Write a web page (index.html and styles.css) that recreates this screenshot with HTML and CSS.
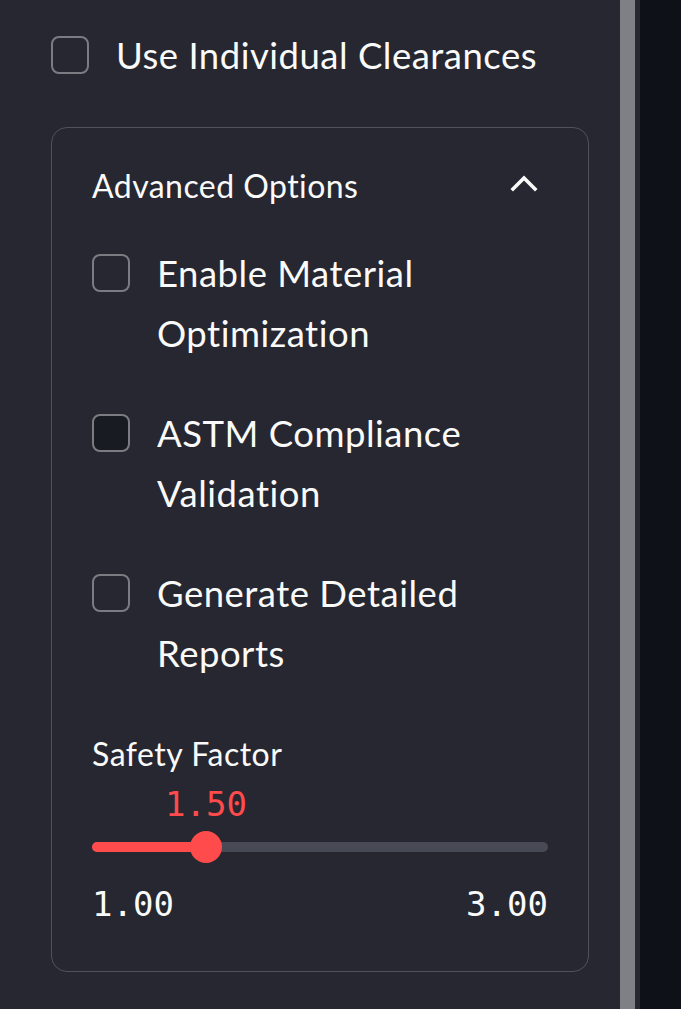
FILE: index.html
```html
<!DOCTYPE html>
<html lang="en">
<head>
<meta charset="utf-8">
<title>Sidebar</title>
<link rel="stylesheet" href="styles.css">
</head>
<body>
<div class="app">
  <aside class="sidebar">
    <div class="sidebar-content">
      <label class="check">
        <span class="box"></span>
        <span class="check-label">Use Individual Clearances</span>
      </label>

      <section class="expander">
        <div class="exp-header">
          <span class="exp-title">Advanced Options</span>
          <svg class="chev" width="28" height="18" viewBox="0 0 28 18" aria-hidden="true">
            <polyline points="3,15 14,4 25,15" fill="none" stroke="#fafafa" stroke-width="3.6" stroke-linecap="square" stroke-linejoin="miter"/>
          </svg>
        </div>
        <div class="exp-body">
          <label class="check">
            <span class="box"></span>
            <span class="check-label">Enable Material Optimization</span>
          </label>
          <label class="check">
            <span class="box box-dark"></span>
            <span class="check-label">ASTM Compliance Validation</span>
          </label>
          <label class="check">
            <span class="box"></span>
            <span class="check-label">Generate Detailed Reports</span>
          </label>

          <div class="slider-block">
            <div class="slider-title">Safety Factor</div>
            <div class="slider">
              <div class="track">
                <div class="fill" style="width:25%"></div>
                <div class="thumb" style="left:25%">
                  <span class="thumb-value">1.50</span>
                </div>
              </div>
            </div>
            <div class="ticks">
              <span>1.00</span>
              <span>3.00</span>
            </div>
          </div>
        </div>
      </section>
    </div>
    <div class="scrollbar"><div class="scroll-thumb"></div></div>
  </aside>
  <main class="main"></main>
</div>
</body>
</html>
```

FILE: styles.css
```css
html, body {
  margin: 0;
  padding: 0;
  height: 100%;
}
body {
  background: #0e1117;
  color: #fafafa;
  font-family: Lato, "Noto Sans", sans-serif;
  overflow: hidden;
}
.app {
  display: flex;
  height: 1009px;
}
.sidebar {
  width: 640px;
  flex: 0 0 640px;
  background: #262730;
  display: flex;
}
.sidebar-content {
  width: 620px;
  padding: 25px 31px 0 51px;
  box-sizing: border-box;
}
.scrollbar {
  width: 15px;
  flex: 0 0 15px;
  background: #7f7f86;
}
.main {
  flex: 1;
  background: #0e1117;
}

.check {
  display: flex;
  align-items: flex-start;
  gap: 27px;
}
.box {
  flex: 0 0 auto;
  width: 38px;
  height: 38px;
  margin-top: 11px;
  border: 2px solid #7b7c82;
  border-radius: 8px;
  box-sizing: border-box;
  background: #262730;
}
.box-dark {
  background: #191b23;
}
.check-label {
  font-size: 36.5px;
  letter-spacing: 0.5px;
  line-height: 60px;
}

.expander {
  margin-top: 42px;
  border: 1.5px solid #505159;
  border-radius: 16px;
  padding: 0 40px 0 40px;
  height: 845px;
  box-sizing: border-box;
}
.exp-header {
  display: flex;
  align-items: center;
  justify-content: space-between;
  height: 60px;
  margin-top: 28px;
}
.exp-title {
  font-size: 32px;
  letter-spacing: 0.45px;
  line-height: 60px;
}
.chev {
  margin-right: 10px;
  margin-top: -6px;
}
.exp-body {
  display: flex;
  flex-direction: column;
  gap: 40px;
  padding-top: 27px;
}

.slider-block {
  margin-top: 7px;
}
.slider-title {
  font-size: 32px;
  letter-spacing: 0.5px;
  line-height: 48px;
}
.slider {
  padding-top: 64px;
  padding-bottom: 0;
}
.track {
  position: relative;
  height: 10px;
  border-radius: 5px;
  background: #474954;
}
.fill {
  height: 100%;
  border-radius: 5px;
  background: #ff4b4b;
}
.thumb {
  position: absolute;
  top: 50%;
  width: 32px;
  height: 32px;
  margin-left: -16px;
  margin-top: -16px;
  border-radius: 50%;
  background: #ff4b4b;
}
.thumb-value {
  position: absolute;
  left: 50%;
  bottom: 39px;
  transform: translateX(-50%);
  font-family: "DejaVu Sans Mono", "Liberation Mono", monospace;
  font-size: 34px;
  line-height: 40px;
  color: #ff4b4b;
  white-space: nowrap;
}
.ticks {
  display: flex;
  justify-content: space-between;
  margin-top: 32px;
  font-family: "DejaVu Sans Mono", "Liberation Mono", monospace;
  font-size: 34px;
  line-height: 40px;
}
```
